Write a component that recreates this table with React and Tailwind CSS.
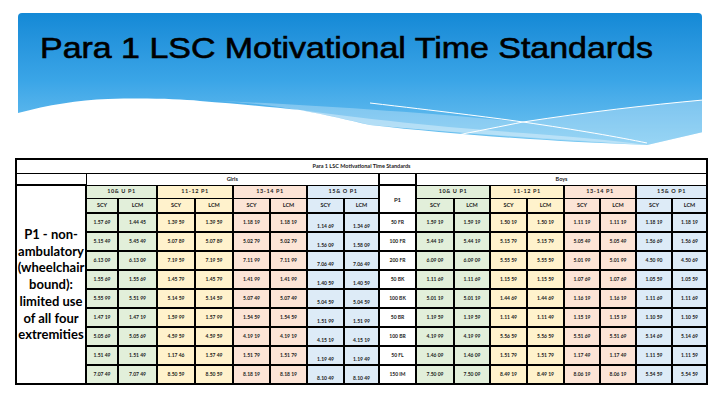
// Para 1 LSC motivational time standards slide
const events = ["50 FR", "100 FR", "200 FR", "50 BK", "100 BK", "50 BR", "100 BR", "50 FL", "150 IM"];

const girls = [
  ["1.57 69", "1.44 45", "1.39 59", "1.39 59", "1.18 19", "1.18 19", "1.14 69", "1.34 69"],
  ["5.15 49", "5.45 49", "5.07 89", "5.07 89", "5.02 79", "5.02 79", "1.56 09", "1.58 09"],
  ["6.13 09", "6.13 09", "7.19 59", "7.19 59", "7.11 99", "7.11 99", "7.06 49", "7.06 49"],
  ["1.55 69", "1.55 69", "1.45 79", "1.45 79", "1.41 99", "1.41 99", "1.40 59", "1.40 59"],
  ["5.55 99", "5.51 99", "5.14 59", "5.14 59", "5.07 49", "5.07 49", "5.04 59", "5.04 59"],
  ["1.47 19", "1.47 19", "1.59 99", "1.57 99", "1.54 59", "1.54 59", "1.51 99", "1.51 99"],
  ["5.05 69", "5.05 69", "4.59 59", "4.59 59", "4.19 19", "4.19 19", "4.15 19", "4.15 19"],
  ["1.51 49", "1.51 49", "1.17 46", "1.57 49", "1.51 79", "1.51 79", "1.19 49", "1.19 49"],
  ["7.07 49", "7.07 49", "8.50 59", "8.50 59", "8.18 19", "8.18 19", "8.10 49", "8.10 49"],
];

const boys = [
  ["1.59 19", "1.59 19", "1.50 19", "1.50 19", "1.11 19", "1.11 19", "1.18 19", "1.18 19"],
  ["5.44 19", "5.44 19", "5.15 79", "5.15 79", "5.05 49", "5.05 49", "1.56 69", "1.56 69"],
  ["6.09 09", "6.09 09", "5.55 59", "5.55 59", "5.01 99", "5.01 99", "4.50 90", "4.50 69"],
  ["1.11 69", "1.11 69", "1.15 59", "1.15 59", "1.07 69", "1.07 69", "1.05 59", "1.05 59"],
  ["5.01 19", "5.01 19", "1.44 69", "1.44 69", "1.16 19", "1.16 19", "1.11 69", "1.11 69"],
  ["1.19 59", "1.19 59", "1.11 49", "1.11 49", "1.15 19", "1.15 19", "1.10 59", "1.10 59"],
  ["4.19 99", "4.19 99", "5.56 59", "5.56 59", "5.51 69", "5.51 69", "5.14 69", "5.14 69"],
  ["1.46 09", "1.46 09", "1.51 79", "1.51 79", "1.17 49", "1.17 49", "1.11 59", "1.11 59"],
  ["7.50 09", "7.50 09", "8.49 19", "8.49 19", "8.06 19", "8.06 19", "5.54 59", "5.54 59"],
];

const groups = [
  { label: "10& U P1", bg: "bg-[#e2efda]" },
  { label: "11-12 P1", bg: "bg-[#fff2cc]" },
  { label: "13-14 P1", bg: "bg-[#fce4d6]" },
  { label: "15& O P1", bg: "bg-[#ddebf7]" },
];

const widths = [70, 32, 39, 38, 38, 37, 37, 37, 35, 37, 38, 36, 37, 37, 36, 36, 36, 35];

function Banner() {
  return (
    <div className="relative h-[135px] overflow-hidden rounded-t-[4px] bg-linear-to-b from-[#1389d6] via-[#3aa5e7] to-[#72c6f1]">
      <h1 className="relative z-10 pt-[21px] pl-[22px] font-['Liberation_Sans',Arial,sans-serif] text-[29px] leading-none text-black [-webkit-text-stroke:0.6px_#000]">
        <span className="inline-block origin-left scale-x-[1.17] whitespace-nowrap">
          Para 1 LSC Motivational Time Standards
        </span>
      </h1>

      {/* wave */}
      <svg className="absolute inset-0" width="685" height="135" viewBox="0 0 685 135">
        <path
          d="M200,88 C300,92 420,101 505,109 C570,100 630,92 685,87 L685,119 L629,132 C500,124 420,118 352,112 C300,100 250,90 200,88 Z"
          fill="#ffffff"
          fillOpacity="0.28"
        />
        <path
          d="M260,94 C330,104 420,114 505,120 C560,124 600,128 629,132 C540,128 440,120 352,112 C320,104 290,98 260,94 Z"
          fill="#ffffff"
          fillOpacity="0.35"
        />
        <path
          d="M0,100 C30,92 60,87 90,86 C130,85 160,86 182,88 C220,91 255,94 282,97 C310,102 330,107 352,112 C440,122 540,129 629,132 L685,119 L685,135 L0,135 Z"
          fill="#ffffff"
        />
        <path d="M352,90 C420,98 470,104 505,109 C560,117 600,124 629,130" stroke="#ffffff" strokeWidth="1" fill="none" />
        <path d="M429,124 C460,118 485,113 505,109 C570,99 630,92 685,87" stroke="#ffffff" strokeWidth="1" fill="none" />
      </svg>
    </div>
  );
}

function Cell({ value, bg, bottom }) {
  return (
    <td className={`${bg} border-2 border-black px-[2px] text-center ${bottom ? "align-bottom pb-[1px]" : "align-middle"}`}>
      {value}
    </td>
  );
}

export default function App() {
  return (
    <div className="h-[405px] w-[720px] overflow-hidden bg-white">
      <div className="px-[18px] pt-[13px]">
        <Banner />
      </div>

      <div className="mt-[10px] ml-[15px]">
        <table className="w-[691px] table-fixed border-collapse border-2 border-black font-['Lato',sans-serif] text-[5px] font-bold text-[#1a1a1a]">
          <colgroup>
            {widths.map((w, i) => (
              <col key={i} style={{ width: w }} />
            ))}
          </colgroup>
          <tbody>
            {/* title */}
            <tr className="h-[14px]">
              <td colSpan={18} className="border-b border-black text-center text-[5.5px]">
                Para 1 LSC Motivational Time Standards
              </td>
            </tr>

            {/* girls / boys */}
            <tr className="h-[12px]">
              <td className="border border-black" />
              <td colSpan={8} className="border border-black text-center text-[5.5px]">
                Girls
              </td>
              <td className="border-x-2 border-y border-black" />
              <td colSpan={8} className="border border-black text-center text-[5.5px]">
                Boys
              </td>
            </tr>

            {/* age groups */}
            <tr className="h-[13px]">
              <td
                rowSpan={11}
                className="overflow-hidden border-2 border-black px-0 text-center align-middle font-['Lato',sans-serif] text-[13px] leading-[16.7px] font-bold text-black"
              >
                P1 - non-
                <br />
                ambulatory
                <br />
                (wheelchair
                <br />
                bound):
                <br />
                limited use
                <br />
                of all four
                <br />
                extremities
              </td>
              {groups.map((g) => (
                <td key={"g" + g.label} colSpan={2} className={`${g.bg} border-x-2 border-y border-black text-center text-[5.5px] tracking-[0.6px]`}>
                  {g.label}
                </td>
              ))}
              <td rowSpan={2} className="border-2 border-black bg-white text-center text-[6px]">
                P1
              </td>
              {groups.map((g) => (
                <td key={"b" + g.label} colSpan={2} className={`${g.bg} border-x-2 border-y border-black text-center text-[5.5px] tracking-[0.6px]`}>
                  {g.label}
                </td>
              ))}
            </tr>

            {/* course */}
            <tr className="h-[15px]">
              {[...groups, ...groups].flatMap((g, i) => [
                <td key={"s" + i} className={`${g.bg} border-x-2 border-y border-black text-center text-[5.5px]`}>
                  SCY
                </td>,
                <td key={"l" + i} className={`${g.bg} border-x-2 border-y border-black text-center text-[5.5px]`}>
                  LCM
                </td>,
              ])}
            </tr>

            {/* data */}
            {events.map((ev, r) => (
              <tr key={ev} className="h-[19px]">
                {girls[r].map((v, c) => (
                  <Cell key={"g" + c} value={v} bg={groups[Math.floor(c / 2)].bg} bottom={c >= 6} />
                ))}
                <td className="border-2 border-black bg-white text-center">{ev}</td>
                {boys[r].map((v, c) => (
                  <Cell key={"b" + c} value={v} bg={groups[Math.floor(c / 2)].bg} />
                ))}
              </tr>
            ))}
          </tbody>
        </table>
      </div>
    </div>
  );
}
